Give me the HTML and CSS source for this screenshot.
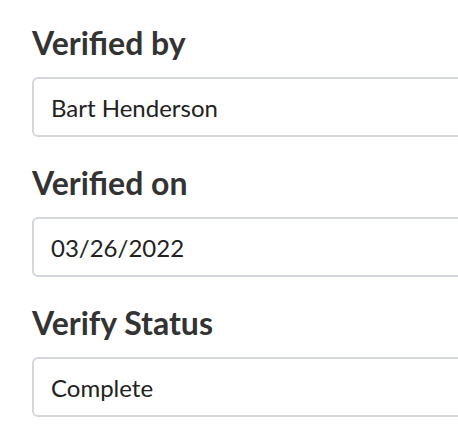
FILE: index.html
```html
<!DOCTYPE html>
<html>
<head>
<meta charset="utf-8">
<link rel="stylesheet" href="styles.css">
</head>
<body>
<div class="form">
  <div class="field">
    <div class="label">Verified by</div>
    <div class="input">Bart Henderson</div>
  </div>
  <div class="field">
    <div class="label">Verified on</div>
    <div class="input">03/26/2022</div>
  </div>
  <div class="field">
    <div class="label">Verify Status</div>
    <div class="input">Complete</div>
  </div>
</div>
</body>
</html>
```
FILE: styles.css
```css
html, body {
  margin: 0;
  padding: 0;
  background: #ffffff;
}
body {
  font-family: Lato, "Liberation Sans", sans-serif;
  color: #2f2f2f;
}
.form {
  display: flex;
  flex-direction: column;
  gap: 27px;
  padding: 24px 0 0 32px;
  overflow: hidden;
}
.field {
  display: flex;
  flex-direction: column;
  gap: 15px;
}
.label {
  font-size: 32px;
  font-weight: 700;
  line-height: 38px;
  color: #333333;
}
.input {
  box-sizing: border-box;
  height: 60px;
  width: 460px;
  border: 2px solid #d3d7db;
  border-radius: 6px;
  padding: 0 0 0 17px;
  display: flex;
  align-items: center;
  font-size: 24px;
  color: #222222;
}
```
